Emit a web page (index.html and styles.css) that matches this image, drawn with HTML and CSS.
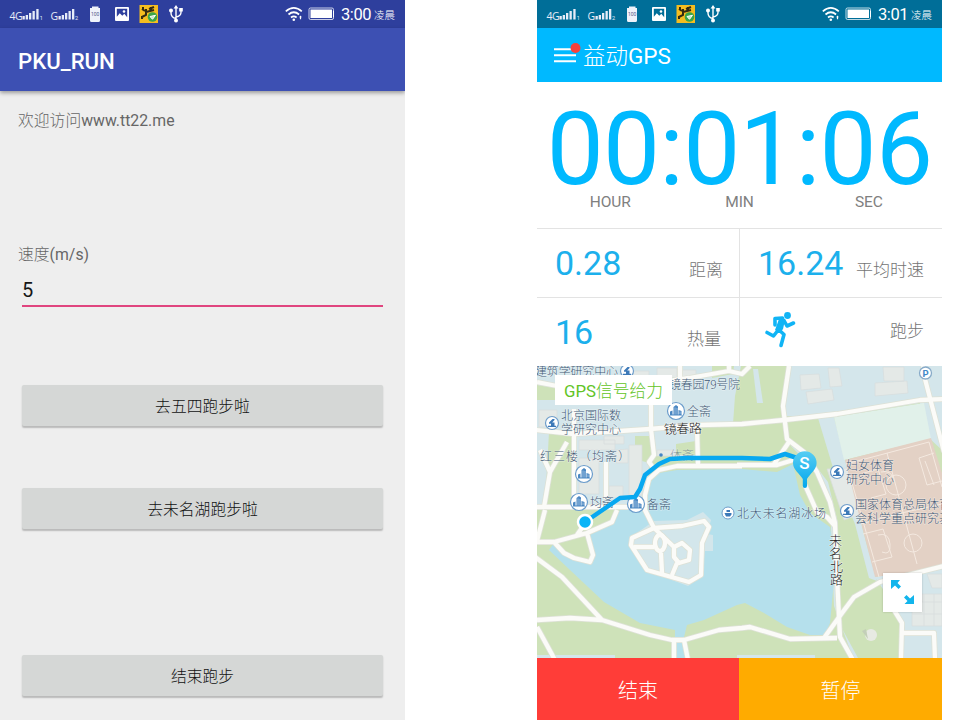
FILE: index.html
```html
<!DOCTYPE html>
<html lang="zh-CN">
<head>
<meta charset="utf-8">
<title>PKU_RUN</title>
<link rel="stylesheet" href="styles.css">
</head>
<body>
<svg class="defs" width="0" height="0">
  <defs>
    <symbol id="status-left" viewBox="0 0 190 28">
      <g fill="#e6ecf8">
        <text x="9.500" y="19.500" class="net">4G</text>
        <path d="M22.500 16h2.300v3.500h-2.300zM25.700 15h2.300v4.500h-2.300zM29 13h2.300v6.500h-2.300zM32.500 11h2.300v8.500h-2.300zM36.300 9h2.300v10.500h-2.300z"/>
        <text x="39.800" y="20" class="sim">1</text>
        <text x="50.500" y="19.500" class="net">G</text>
        <path d="M58.500 16h2.300v3.500h-2.300zM61.700 15h2.300v4.500h-2.300zM65 13h2.300v6.500h-2.300zM68.500 11h2.300v8.500h-2.300zM72 9h2.300v10.500h-2.300z"/>
        <text x="75" y="20" class="sim">2</text>
      </g>
      <path d="M92 6.500h6.500v1.500h1.500v12.500q0 1.500-1.500 1.500h-7q-1.500 0-1.500-1.500V8h2z" fill="#eef2fa"/>
      <text x="91" y="16.400" class="tiny">100</text>
      <path fill-rule="evenodd" d="M116 7h12q1 0 1 1v12q0 1-1 1h-12q-1 0-1-1V8q0-1 1-1zM116.800 8.800v8l3-3.500 2.500 2.500 2-2 2.900 3.500V8.800z" fill="#fff"/><circle cx="124" cy="11.500" r="1.300" fill="#fff"/>
      <rect x="139.500" y="5" width="18.500" height="18" fill="#f5bd20"/>
      <path d="M142 9l3 2M149 9l5-2M146 9v6l-4 2M146 12l8-2M151 7v4M143 7v3M142 16v3" stroke="#332b12" stroke-width="2" fill="none"/>
      <circle cx="152.500" cy="17" r="4.800" fill="#3aa648"/><path d="M150 16.500l2.500 2.800 3-4z" stroke="#fff" fill="#bfeac0" stroke-width="1"/>
      <g stroke="#fff" stroke-width="1.400" fill="none"><path d="M176 21V7M176 18.500q-5-1-5-5.500v-2M176 17q5-1 5-4.500V10"/></g>
      <path d="M176 5l-2.400 3.500h4.800zM179.200 8h3.600v3.600h-3.600z" fill="#fff"/><circle cx="171" cy="10.500" r="2" fill="#fff"/><circle cx="176" cy="20.500" r="2" fill="#fff"/>
    </symbol>
    <symbol id="wifi" viewBox="0 0 18 16">
      <g fill="none" stroke="#fff" stroke-width="1.700"><path d="M.8 5.300q8-7 16 0M3.500 8.500q5.300-4.500 10.600 0M6 11.500q2.800-2.300 5.600 0"/></g>
      <circle cx="8.800" cy="13.800" r="1.300" fill="#fff"/><path d="M15.500 9.500l1.400 1.800h-.8v2h-1.200v-2h-.8z" fill="#fff"/>
    </symbol>
    <symbol id="battery" viewBox="0 0 27 14">
      <rect x="1" y="1" width="24.500" height="11.500" rx="1.500" fill="none" stroke="#fff" stroke-opacity=".75"/><rect x="2.500" y="2.500" width="21.500" height="8.500" fill="#fff"/><path d="M25.500 4v6" stroke="#fff"/>
    </symbol>
    <symbol id="tower" viewBox="0 0 20 20">
      <circle cx="10" cy="10" r="8.500" fill="#fff" stroke="#6b9ccb" stroke-width="1.200"/>
      <path d="M4 14.500V10.500l2.500-1v4h1V6l2.500-2 2 1.500v8h.5V9l3 1v3.500l1 1z" fill="#4a87c2"/><path d="M9 6.500v7M11 7v6.500M14 10.500V13" stroke="#cfe2f4" stroke-width=".6"/>
    </symbol>
    <symbol id="school" viewBox="0 0 16 16">
      <circle cx="8" cy="8" r="6.500" fill="#fff" stroke="#6f9ecb" stroke-width="1.200"/>
      <path d="M4 12h8v-1.300h-1.500V7.500H8.200L10.500 5V4H8.500L5 7.500v1.200h2v2H4z" fill="#3c79b8"/>
    </symbol>
  </defs>
</svg>
<div class="stage">
  <section class="phone runner">
    <header class="status">
      <svg class="left" width="190" height="28"><use href="#status-left"/></svg>
      <svg class="wifi" width="18" height="16"><use href="#wifi"/></svg>
      <svg class="battery" width="27" height="14"><use href="#battery"/></svg>
      <span class="clock">3:00</span><span class="period">凌晨</span>
    </header>
    <h1 class="appbar">PKU_RUN</h1>
    <main class="form">
      <p class="welcome"><span class="cn">欢迎访问</span>www.tt22.me</p>
      <p class="label"><span class="cn">速度</span>(m/s)</p>
      <div class="field">5</div>
      <button class="btn first">去五四跑步啦</button>
      <button class="btn second">去未名湖跑步啦</button>
      <button class="btn third">结束跑步</button>
    </main>
  </section>

  <section class="phone gps">
    <header class="status">
      <svg class="left" width="190" height="28"><use href="#status-left"/></svg>
      <svg class="wifi" width="18" height="16"><use href="#wifi"/></svg>
      <svg class="battery" width="27" height="14"><use href="#battery"/></svg>
      <span class="clock">3:01</span><span class="period">凌晨</span>
    </header>
    <div class="titlebar">
      <svg width="28" height="22"><path d="M0 7.300h22M0 13.300h22M0 19.300h22" stroke="#fff" stroke-width="2"/><circle cx="21.500" cy="6" r="5" fill="#f8403b"/></svg>
      <span><span class="cn">益动</span>GPS</span>
    </div>
    <div class="timer">
      <div class="digits">00:01:06</div>
      <div class="units"><span>HOUR</span><span>MIN</span><span>SEC</span></div>
    </div>
    <div class="stats">
      <div class="stat distance"><b>0.28</b><span>距离</span></div>
      <div class="stat speed"><b>16.24</b><span>平均时速</span></div>
      <div class="stat heat"><b>16</b><span>热量</span></div>
      <div class="stat mode">
        <svg width="34" height="38" viewBox="0 0 34 38"><circle cx="24.500" cy="4.500" r="3.400" fill="#10b4f5"/><path d="M12 14V7.500L19.500 7l-4 11M21 9.500l3 5.500 6.500-3M4 21.500l6.500 3.500 5.500-7M15.500 18.500l5.500 5-3 11" fill="none" stroke="#10b4f5" stroke-width="3.600" stroke-linejoin="round" stroke-linecap="round"/><path d="M16 8l6 1-2 9-3 4-5-3z" fill="#10b4f5"/></svg>
        <span>跑步</span>
      </div>
    </div>
    <div class="map">
      <svg width="405" height="292" viewBox="0 0 405 292">
        <rect width="405" height="292" fill="#cee2b9"/>
        <g fill="#d4e6eb">
          <path d="M0 0H204L198 30 196 58 160 60V90H116L112 100 109 130 96 142H37V68L0 64zM0 66H12L8 140H0z"/>
          <path d="M252 0H405V84L393 73 383 37 297 51 308 94 330 180 340 215 332 212 318 158 300 115 281 52 250 50 247 40z"/>
          <path d="M216 3h5l5 34h-6z"/>
          <path d="M338 211L405 200V292H366V257L357 240zM253 79L272 91 291 116 301 157 301 255 321 292H316L297 240 293 136 279 106zM0 289h78v3H0zM200 289h78v3h-78z"/>
        </g>
        <g fill="#cee2b9"><path d="M0 19l18 3v12H0zM12 77l24-7v63H12zM98 70h15l4 19-5 8-14-4zM139 78l20-3v14h-20zM175 0h22l-1 8-21 4zM102 20h10v18h-10z"/></g>
        <g fill="#e4e9e7" stroke="#d7dddd" stroke-width=".7">
          <path d="M2 44h18v17H2zM42 74h36v10H42zM42 92h20v36H42zM92 79h13v50H92zM79 84l12-1v14H79zM72 120h14v12H72zM67 70h20v8H67zM120 84h18v6h-18zM85 5h27v10H85zM120 2h20v10h-20zM145 4h14v7h-14z"/>
          <path d="M263 9l19-1 2 14-20 2zM291 2l11 0 3 18-12 1zM269 26l26-3 2 11-26 4zM346 1h21v14h-20zM338 17l32-2 1 12-33 3zM290 103l22-1 15 45-20 7z"/>
          <path d="M390 208h15v14h-10zM385 228h20v32h-30v-24h10zM385 236h20M375 248h30M387 228v32M397 228v32"/>
        </g>
        <path d="M297 51L387 37 394 73 307 94z" fill="#e1f1ea"/>
        <path d="M308 94L394 72 405 107V202L338 211z" fill="#e3d1c5"/>
        <g stroke="#f4e9e0" stroke-width="1" fill="none"><path d="M309 98L392 76 405 121M313 110L342 211M350 87L380 198M324 158L360 148 405 138M326 168l20-5 9 28-20 5M382 92l15-5M382 92l8 27 15-4M388 95l9 24M327 107l14-4 8 25-15 4"/><circle cx="359" cy="119" r="10"/><circle cx="376" cy="177" r="9"/><path d="M341 169q11-3 12 9t-8 8M344 106q10-2 12 6"/></g>
        <path d="M12 184L17 177 28 187 38 193 54 197 57 189 51 170 75 157 84 142 98 140 110 143 108 129 113 116 122 107 140 104 205 103 240 106 256 98 263 129 273 147 293 161 297 185V215L293 257 288 269 273 269 250 261 227 247 208 237 200 239 167 254 150 259 147 271 149 292H138V264L103 257 67 236 33 204z" fill="#b5e0ec"/>
        <path d="M94 171L117 155 150 154 166 146 174 154 170 168 176 169V185H168L165 210 151 220 108 204 93 180z" fill="#d3e6eb"/>
        <defs><g id="roads">
          <path d="M-2 64L37 68 113 63 160 59 205 58 247 54 300 48 383 34 407 33"/>
          <path d="M114 35V63L117 89 112 96 117 103M37 43V143M69 96V133M0 141H100M30 76L13 106 7 141M3 84L13 106M160 61L161 98"/>
          <path d="M205 100L140 100 122 104 112 113 108 129V144L117 162M200 99H240L253 95 266 89M237 98L252 76"/>
          <path d="M0 16L20 20M143 0V15M118 17L152 12 192 5 205 8 213 0M192 0V5M252 0L246 40 250 73 267 86 280 106 293 136 298 157 300 211 303 271 316 294M268 119L280 146 290 151 298 160"/>
          <path d="M386 0L388 13 407 86M287 272L305 247 317 231 343 216 407 200M357 244L365 257 364 294M365 267H397L398 294"/>
          <path d="M0 254L33 252 65 254 113 269 135 274H147L182 264 205 262 213 261 253 273 300 272M-2 191L25 211 65 254M0 261L18 294M137 274V294M147 274L151 294"/>
          <path d="M-2 176H17L50 167 75 156 80 144M17 176L27 187 37 192 53 196 56 189 50 167M0 175L8 144M40 169L47 159"/>
          <path d="M117 162L145 160 167 155 172 161 165 177 164 209 152 216 110 204 94 179 95 172zM117 162L137 181 145 177 153 184 152 194 142 197 137 191 137 181M97 181H117M124 187L125 207M140 197L135 209"/>
          <ellipse cx="123" cy="177" rx="5" ry="8"/>
        </g></defs>
        <use href="#roads" class="road-edge"/><use href="#roads" class="road"/>
        <circle cx="334" cy="269" r="6" fill="#e7eae3"/><path d="M325 265l4-2 2 10z" fill="#c3cfb8"/>
        <g class="poi">
          <text x="-2" y="10" textLength="83">建筑学研究中心</text><text x="132" y="23" textLength="71">镜春园79号院</text>
          <text x="24" y="54">北京国际数</text><text x="24" y="68">学研究中心</text><text x="150" y="50">全斋</text>
          <text x="3" y="95" textLength="90">红三楼（均斋）</text><text x="133" y="93.500" opacity=".55">体斋</text><text x="53" y="141">均斋</text><text x="110" y="143">备斋</text>
          <text x="200" y="151.500" textLength="89">北大未名湖冰场</text><text x="309" y="104">妇女体育</text><text x="309" y="118">研究中心</text><text x="318" y="143">国家体育总局体育</text><text x="318" y="157">会科学重点研究基</text>
        </g>
        <g class="street"><text x="127" y="68" transform="rotate(-2 127 67)" textLength="38">镜春路</text><text x="292" y="179">未</text><text x="292" y="192">名</text><text x="293" y="204.500">北</text><text x="293" y="217.500">路</text></g>
        <g><use href="#tower" x="129" y="35" width="20" height="20"/><use href="#tower" x="37" y="98" width="20" height="20"/><use href="#tower" x="32" y="126" width="20" height="20"/><use href="#tower" x="89" y="128" width="20" height="20"/>
        <use href="#school" x="82" y="-3" width="16" height="16"/><use href="#school" x="7" y="49" width="16" height="16"/><use href="#school" x="292" y="98" width="16" height="16"/><use href="#school" x="302" y="137" width="16" height="16"/></g>
        <circle cx="191" cy="147" r="6" fill="#fff" stroke="#6f9ecb"/><path d="M187.500 147h7v1.500l-1.500 2h-4zM189.500 144h3.500v2h-3.500z" fill="#3c79b8"/>
        <circle cx="388.500" cy="7" r="6" fill="#fff" stroke="#88abc9" stroke-width="1.300"/><text x="385.500" y="10.500" class="park">P</text>
        <circle cx="124" cy="89" r="1.800" fill="#4585c5"/>
        <path d="M48 156L67 143 83 132 98 131 103 123 108 109 122 98 133 93 150 92H205L233 93 248 88 260 92 268 98" fill="none" stroke="#08a8f0" stroke-width="4.500" stroke-linejoin="round"/>
        <circle cx="48" cy="156" r="7" fill="#08b4f7" stroke="#fff" stroke-width="2.500"/>
        <defs><linearGradient id="pin-fill" x2="0" y2="1"><stop stop-color="#56cdf3"/><stop offset="1" stop-color="#02a6ec"/></linearGradient></defs>
        <path d="M256 97a11.800 11.800 0 1 1 23.600 0c0 7-7 11-9.600 16v7a2 2 0 0 1-4.200 0v-7c-2.700-5-9.800-9-9.800-16z" fill="url(#pin-fill)"/><text x="262.200" y="103" class="pin">S</text>
      </svg>
      <div class="signal">GPS<span class="cn">信号给力</span></div>
      <div class="expand"><svg width="39" height="39"><path d="M8 7h9l-2.500 3 3.500 3.500-2.500 2.500-3.500-3.500L8 16zM31 31h-9.500l3-3-3.500-3.500 2.500-2.500 3.500 3.500 4-3.500z" fill="#12b5ec"/></svg></div>
    </div>
    <footer class="actions"><div class="end">结束</div><div class="pause">暂停</div></footer>
  </section>
</div>
</body>
</html>
```
FILE: styles.css
```css
* { box-sizing: border-box; }
body { margin: 0; background: #fff; font-family: Roboto, "Noto Sans CJK SC", sans-serif; overflow: hidden; }
p, h1 { margin: 0; }
.defs { display: block; position: absolute; }
.stage { display: flex; justify-content: space-between; width: 942px; height: 720px; }
.phone { width: 405px; height: 720px; display: flex; flex-direction: column; overflow: hidden; }
.cn { font-family: "Noto Sans CJK SC", sans-serif; font-weight: 300; }

.status { height: 28px; flex: none; display: flex; align-items: center; color: #fff; padding-right: 10px; }
.status .left { margin-right: auto; }
.wifi { margin-right: 5px; }
.battery { margin-right: 6px; }
.clock { font-size: 16.500px; letter-spacing: -.4px; width: 33px; line-height: 28px; padding-top: 1px; }
.period { font-size: 10.500px; line-height: 14px; padding-top: 3px; font-weight: 300; width: 21px; white-space: nowrap; }
.net { font: 10.500px "Open Sans", sans-serif; letter-spacing: -.5px; }
.sim { font: 5.500px Roboto, sans-serif; }
.tiny { font: 5px Roboto, sans-serif; fill: #56618c; }

.runner { background: #eee; }
.runner .status { background: #2e3f9d; }
.appbar { height: 63px; flex: none; background: #3d50b3; color: #fff; font-size: 22.200px; font-weight: 500; line-height: 66px; padding-left: 18px; box-shadow: 0 2px 4px rgba(0,0,0,.35); }
.form { display: flex; flex-direction: column; padding: 17px 22px 0; color: #666; font-size: 15.800px; }
.welcome, .label { margin-left: -4px; height: 24px; line-height: 24px; }
.label { margin-top: 110px; }
.field { height: 41px; border-bottom: 2px solid #e0457f; color: #161616; font-size: 20px; line-height: 49px; padding-left: 0; }
.btn { height: 41px; border: 0; border-radius: 2px; padding: 0; background: #d5d7d6; color: #111; font: 300 15.800px/41px "Noto Sans CJK SC", sans-serif; box-shadow: 0 1.500px 1.500px rgba(0,0,0,.22); width: 361px; }
.first { margin-top: 78px; }
.second { margin-top: 62px; }
.third { margin-top: 126px; }

.gps { background: #fff; }
.gps .status { background: #006e98; }
.titlebar { height: 54px; flex: none; background: #00b9ff; color: #fff; display: flex; align-items: center; padding-left: 17px; font-size: 22.500px; gap: 1px; }
.titlebar svg { margin-top: -5px; }
.titlebar span { line-height: 54px; }
.timer { height: 146px; flex: none; }
.digits { height: 110px; padding-top: 18px; font-size: 101.500px; line-height: 100px; letter-spacing: -.75px; text-align: center; color: #00b9ff; white-space: nowrap; }
.units { display: grid; grid-template-columns: repeat(3, 1fr); padding: 0 8.500px; text-align: center; font-size: 15.500px; letter-spacing: -.1px; line-height: 20px; color: #808080; }
.stats { height: 138px; flex: none; display: grid; grid-template: 68.500px 69.500px / 203px 202px; }
.stat { display: flex; justify-content: space-between; align-items: center; padding: 1px 18px 0; border-top: 1px solid #e3e3e3; }
.stat b { font-size: 34px; font-weight: 400; color: #1cb0ec; }
.stat span { font: 300 17px/24px "Noto Sans CJK SC", sans-serif; color: #747474; padding-top: 12px; white-space: nowrap; }
.distance, .heat { border-right: 1px solid #e3e3e3; padding-right: 16px; }
.heat { padding-right: 18px; }
.mode { padding: 0 18px 3px 23px; }
.mode span { padding: 0; }

.map { height: 292px; flex: none; position: relative; overflow: hidden; }
.map > svg { display: block; }
.road-edge { fill: none; stroke: #dde1d6; stroke-width: 5.800; stroke-linejoin: round; }
.road { fill: none; stroke: #fbfbf8; stroke-width: 4.300; stroke-linejoin: round; }
.poi { font: 300 12px "Noto Sans CJK SC", sans-serif; fill: #3f5875; stroke: #fff; stroke-opacity: .4; stroke-width: 1.200; paint-order: stroke; }
.street { font: 300 13px "Noto Sans CJK SC", sans-serif; fill: #222; stroke: #fff; stroke-opacity: .6; stroke-width: 1.200; paint-order: stroke; }
.park { font: 700 9.500px Roboto, sans-serif; fill: #4388c8; stroke: none; }
.pin { font: 500 17px Roboto, sans-serif; fill: #fff; }
.signal { position: absolute; left: 18px; top: 9px; width: 117px; height: 30px; background: #fff; color: #62c426; font-size: 16.800px; line-height: 31px; padding-left: 9px; white-space: nowrap; }
.expand { position: absolute; left: 346px; top: 207px; width: 39px; height: 39px; background: #fff; box-shadow: 0 0 2px rgba(0,0,0,.2); }
.actions { height: 62px; display: grid; grid-template-columns: 202px 203px; flex: none; color: #fff; text-align: center; font: 300 20px/63px "Noto Sans CJK SC", sans-serif; }
.end { background: #ff3d38; }
.pause { background: #ffab00; }
```
